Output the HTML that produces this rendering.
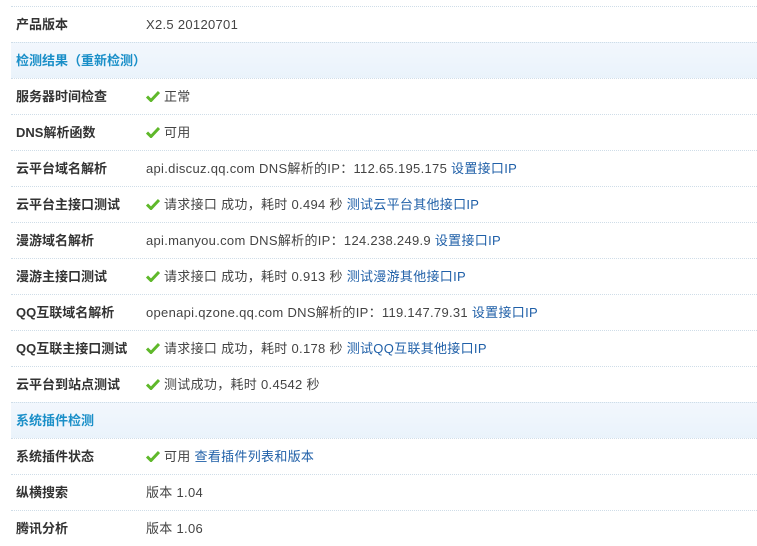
<!DOCTYPE html>
<html><head><meta charset="utf-8"><style>
body{margin:0;width:757px;height:535px;overflow:hidden;background:#fff;font-family:"Liberation Sans","Noto Sans CJK SC",sans-serif;font-size:13px;color:#444}
.wrap{position:absolute;left:11px;top:6px;right:0}
.r{height:35px;border-top:1px dotted #cfdde8;position:relative;line-height:35px}
.l{position:absolute;left:5px;font-weight:bold;color:#333}
.v{position:absolute;left:135px;letter-spacing:0.3px;white-space:nowrap}
.h{background:linear-gradient(#f2f7fd,#eaf3fb);color:#1a8fc8;font-weight:bold;padding-left:5px}
a{color:#2060a8;text-decoration:none}
.ck{display:inline-block;width:14px;height:12px;vertical-align:-1px;margin-right:4px}
</style></head><body><div class="wrap">
<div class="r"><span class="l">产品版本</span><span class="v">X2.5 20120701</span></div>
<div class="r h">检测结果（重新检测）</div>
<div class="r"><span class="l">服务器时间检查</span><span class="v"><svg class="ck" viewBox="0 0 14 12"><path d="M1 6.5L5 10.5L13 2" stroke="#5fb82a" stroke-width="3" fill="none"/></svg>正常</span></div>
<div class="r"><span class="l">DNS解析函数</span><span class="v"><svg class="ck" viewBox="0 0 14 12"><path d="M1 6.5L5 10.5L13 2" stroke="#5fb82a" stroke-width="3" fill="none"/></svg>可用</span></div>
<div class="r"><span class="l">云平台域名解析</span><span class="v">api.discuz.qq.com DNS解析的IP：112.65.195.175 <a>设置接口IP</a></span></div>
<div class="r"><span class="l">云平台主接口测试</span><span class="v"><svg class="ck" viewBox="0 0 14 12"><path d="M1 6.5L5 10.5L13 2" stroke="#5fb82a" stroke-width="3" fill="none"/></svg>请求接口 成功，耗时 0.494 秒 <a>测试云平台其他接口IP</a></span></div>
<div class="r"><span class="l">漫游域名解析</span><span class="v">api.manyou.com DNS解析的IP：124.238.249.9 <a>设置接口IP</a></span></div>
<div class="r"><span class="l">漫游主接口测试</span><span class="v"><svg class="ck" viewBox="0 0 14 12"><path d="M1 6.5L5 10.5L13 2" stroke="#5fb82a" stroke-width="3" fill="none"/></svg>请求接口 成功，耗时 0.913 秒 <a>测试漫游其他接口IP</a></span></div>
<div class="r"><span class="l">QQ互联域名解析</span><span class="v">openapi.qzone.qq.com DNS解析的IP：119.147.79.31 <a>设置接口IP</a></span></div>
<div class="r"><span class="l">QQ互联主接口测试</span><span class="v"><svg class="ck" viewBox="0 0 14 12"><path d="M1 6.5L5 10.5L13 2" stroke="#5fb82a" stroke-width="3" fill="none"/></svg>请求接口 成功，耗时 0.178 秒 <a>测试QQ互联其他接口IP</a></span></div>
<div class="r"><span class="l">云平台到站点测试</span><span class="v"><svg class="ck" viewBox="0 0 14 12"><path d="M1 6.5L5 10.5L13 2" stroke="#5fb82a" stroke-width="3" fill="none"/></svg>测试成功，耗时 0.4542 秒</span></div>
<div class="r h">系统插件检测</div>
<div class="r"><span class="l">系统插件状态</span><span class="v"><svg class="ck" viewBox="0 0 14 12"><path d="M1 6.5L5 10.5L13 2" stroke="#5fb82a" stroke-width="3" fill="none"/></svg>可用 <a>查看插件列表和版本</a></span></div>
<div class="r"><span class="l">纵横搜索</span><span class="v">版本 1.04</span></div>
<div class="r"><span class="l">腾讯分析</span><span class="v">版本 1.06</span></div>
</div></body></html>
